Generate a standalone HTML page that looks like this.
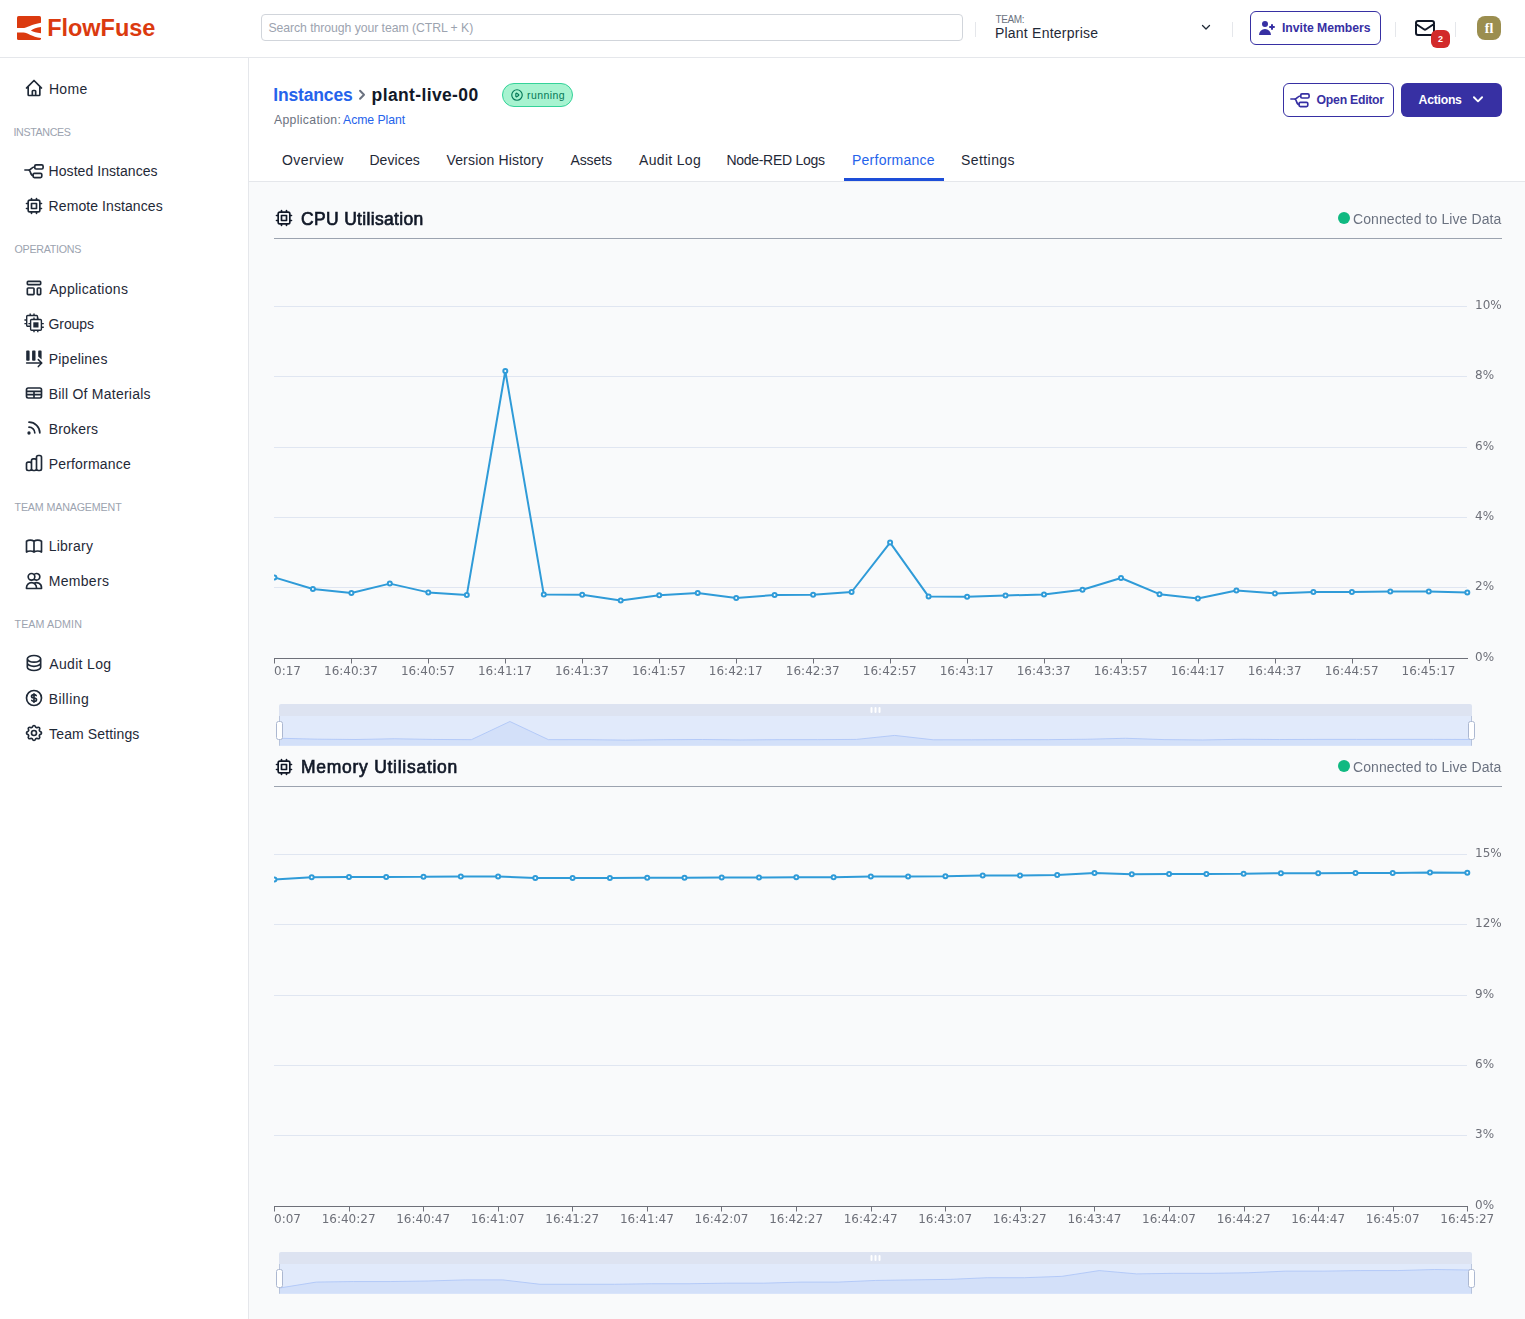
<!DOCTYPE html><html lang="en"><head><meta charset="utf-8"><title>FlowFuse - plant-live-00 - Performance</title><style>
*{box-sizing:border-box}
html,body{margin:0;padding:0}
body{width:1525px;height:1319px;overflow:hidden;position:relative;background:#f9fafb;font-family:"Liberation Sans",sans-serif}
.a{position:absolute;display:block}
.t{position:absolute;white-space:pre;line-height:20px;height:20px}
.sep{position:absolute;top:22px;width:1px;height:15px;background:#e5e7eb}
</style></head><body>
<header>
<div class="a" style="left:0;top:0;width:1525px;height:58px;background:#fff;border-bottom:1px solid #e5e7eb"></div>
<svg class="a" style="left:17px;top:16px" width="24" height="24" viewBox="0 0 24 24"><rect width="24" height="24" rx="1.6" fill="#db3a0f"/><path d="M0 12.1H5.5C10 12.1 14.5 8.3 24 6.8V11.1C19.5 11.6 16.5 13 13.9 14.5C16.5 15.9 19.5 16.9 24 17.2V21.95C14.5 21.2 11 16.6 6.5 16.6H0z" fill="#fff"/></svg>
<div class="a" style="left:261px;top:14px;width:702px;height:27px;border:1px solid #d1d5db;border-radius:4px;background:#fff"></div>
<div class="sep" style="left:975px"></div>
<div class="sep" style="left:1232px"></div>
<div class="sep" style="left:1395px"></div>
<div class="sep" style="left:1455px"></div>
<svg class="a" style="left:1200.2px;top:20.7px" width="12" height="12" viewBox="0 0 24 24" fill="none" stroke="#1f2937" stroke-width="2.6" stroke-linecap="round" stroke-linejoin="round"><path d="M19 9l-7 7-7-7"/></svg>
<div class="a" style="left:1250px;top:11px;width:131px;height:34px;border:1px solid #3730a3;border-radius:6px;background:#fff"></div>
<svg class="a" style="left:1257px;top:17.5px" width="20" height="20" viewBox="0 0 20 20" fill="#3730a3"><path d="M8 9a3 3 0 100-6 3 3 0 000 6zM8 11a6 6 0 016 6H2a6 6 0 016-6zM16 7a1 1 0 10-2 0v1h-1a1 1 0 100 2h1v1a1 1 0 102 0v-1h1a1 1 0 100-2h-1V7z"/></svg>
<svg class="a" style="left:1413px;top:16px" width="24" height="24" viewBox="0 0 24 24" fill="none" stroke="#111827" stroke-width="2" stroke-linecap="round" stroke-linejoin="round"><path d="M3 8l7.89 5.26a2 2 0 002.22 0L21 8M5 19h14a2 2 0 002-2V7a2 2 0 00-2-2H5a2 2 0 00-2 2v10a2 2 0 002 2z"/></svg>
<div class="a" style="left:1431px;top:30px;width:19px;height:18px;border-radius:6px;background:#d22a2b;color:#fff;font-size:9px;font-weight:700;text-align:center;line-height:18px">2</div>
<div class="a" style="left:1477px;top:16px;width:24px;height:24px;border-radius:8px;background:#9b8e4f;color:#fff;font-family:'Liberation Serif',serif;font-size:14px;font-weight:700;text-align:center;line-height:25px">fl</div>
<div class="t" style="left:268.40px;top:17.50px;font-size:12.25px;color:#9ca3af;letter-spacing:-0.059px;">Search through your team (CTRL + K)</div>
<div class="t" style="left:995.60px;top:9.50px;font-size:10px;color:#6b7280;letter-spacing:-0.400px;">TEAM:</div>
<div class="t" style="left:994.90px;top:23.00px;font-size:14px;color:#1f2937;letter-spacing:0.233px;">Plant Enterprise</div>
<div class="t" style="left:1282.00px;top:17.50px;font-size:12.25px;color:#3730a3;letter-spacing:-0.046px;font-weight:700;">Invite Members</div>
<div class="t" style="left:47.20px;top:17.90px;font-size:23.5px;color:#db3a0f;letter-spacing:-0.029px;font-weight:700;">FlowFuse</div>
</header>
<nav>
<div class="a" style="left:0;top:58px;width:249px;height:1261px;background:#fff;border-right:1px solid #e5e7eb"></div>
<svg class="a" style="left:24px;top:78px" width="20" height="20" viewBox="0 0 24 24" fill="none" stroke="#1f2937" stroke-width="2" stroke-linecap="round" stroke-linejoin="round"><path d="M3 12l2-2m0 0l7-7 7 7M5 10v10a1 1 0 001 1h3m10-11l2 2m-2-2v10a1 1 0 01-1 1h-3m-6 0a1 1 0 001-1v-4a1 1 0 011-1h2a1 1 0 011 1v4a1 1 0 001 1m-6 0h6"/></svg>
<svg class="a" style="left:24px;top:161px" width="20" height="20" viewBox="0 0 20 20" fill="none" stroke="#1f2937" stroke-width="1.67" stroke-linecap="round" stroke-linejoin="round"><rect x="10.7" y="3.9" width="8.4" height="4.1" rx="1.3"/><rect x="9.1" y="12.3" width="8.7" height="4.3" rx="1.3"/><path d="M0.9 9H4.2C7.6 9 7 6 10.7 6M4.2 9C7.6 9 5.6 14.5 9.1 14.5"/></svg>
<svg class="a" style="left:24px;top:196px" width="20" height="20" viewBox="0 0 24 24" fill="none" stroke="#1f2937" stroke-width="2" stroke-linecap="round" stroke-linejoin="round"><path d="M9 3v2m6-2v2M9 19v2m6-2v2M5 9H3m2 6H3m18-6h-2m2 6h-2M7 19h10a2 2 0 002-2V7a2 2 0 00-2-2H7a2 2 0 00-2 2v10a2 2 0 002 2zM9 9h6v6H9V9z"/></svg>
<svg class="a" style="left:24px;top:277.5px" width="20" height="20" viewBox="0 0 24 24" fill="none" stroke="#1f2937" stroke-width="2" stroke-linecap="round" stroke-linejoin="round"><path d="M4 5a1 1 0 011-1h14a1 1 0 011 1v2a1 1 0 01-1 1H5a1 1 0 01-1-1V5zM4 13a1 1 0 011-1h6a1 1 0 011 1v6a1 1 0 01-1 1H5a1 1 0 01-1-1v-6zM16 13a1 1 0 011-1h2a1 1 0 011 1v6a1 1 0 01-1 1h-2a1 1 0 01-1-1v-6z"/></svg>
<svg class="a" style="left:23.6px;top:313.2px" width="22" height="22" viewBox="0 0 22 22" fill="none" stroke="#1f2937" stroke-width="1.4" stroke-linecap="butt" stroke-linejoin="round"><rect x="2.7" y="2.5" width="10.8" height="10.8" rx="1"/><path d="M6.2 2.5V0.6M10 2.5V0.6M2.7 7H0.4M2.7 10.6H0.4"/><rect x="6.6" y="6.5" width="10.8" height="10.8" rx="1" fill="#fff"/><rect x="9.3" y="9.3" width="5.2" height="5.2" fill="#1f2937" stroke="none"/><path d="M10 6.5V4.6M13.8 6.5V4.6M10 17.3V19.3M13.8 17.3V19.3M6.6 10.6H4.4M17.4 10.6H19.8M17.4 14.2H19.8"/></svg>
<svg class="a" style="left:24px;top:347.8px" width="20" height="20" viewBox="0 0 20 20" fill="none" stroke="#1f2937" stroke-width="1.5" stroke-linecap="round" stroke-linejoin="round"><rect x="2.2" y="2.6" width="3.4" height="10.2" rx="0.8" fill="#1f2937" stroke="none"/><rect x="8.1" y="2.6" width="3.4" height="10.2" rx="0.8" fill="#1f2937" stroke="none"/><path d="M14.2 3.4a0.8 0.8 0 01.8-.8h1.8a0.8 0.8 0 01.8.8V11.6L14.2 8.6z" fill="#1f2937" stroke="none"/><path d="M2.6 15H17.6M14.3 11.6L17.8 15L14.3 18.6"/></svg>
<svg class="a" style="left:24px;top:382.5px" width="20" height="20" viewBox="0 0 24 24" fill="none" stroke="#1f2937" stroke-width="2" stroke-linecap="round" stroke-linejoin="round"><path d="M3 10h18M3 14h18m-9-4v8m-7 0h14a2 2 0 002-2V8a2 2 0 00-2-2H5a2 2 0 00-2 2v8a2 2 0 002 2z"/></svg>
<svg class="a" style="left:24px;top:417.5px" width="20" height="20" viewBox="0 0 24 24" fill="none" stroke="#1f2937" stroke-width="2" stroke-linecap="round" stroke-linejoin="round"><path d="M6 5c7.18 0 13 5.82 13 13M6 11a7 7 0 017 7m-6 0a1 1 0 11-2 0 1 1 0 012 0z"/></svg>
<svg class="a" style="left:24px;top:452.5px" width="20" height="20" viewBox="0 0 24 24" fill="none" stroke="#1f2937" stroke-width="2" stroke-linecap="round" stroke-linejoin="round"><path d="M9 19v-6a2 2 0 00-2-2H5a2 2 0 00-2 2v6a2 2 0 002 2h2a2 2 0 002-2zm0 0V9a2 2 0 012-2h2a2 2 0 012 2v10m-6 0a2 2 0 002 2h2a2 2 0 002-2m0 0V5a2 2 0 012-2h2a2 2 0 012 2v14a2 2 0 01-2 2h-2a2 2 0 01-2-2z"/></svg>
<svg class="a" style="left:24px;top:535.8px" width="20" height="20" viewBox="0 0 24 24" fill="none" stroke="#1f2937" stroke-width="2" stroke-linecap="round" stroke-linejoin="round"><path d="M12 6.253v13m0-13C10.832 5.477 9.246 5 7.5 5S4.168 5.477 3 6.253v13C4.168 18.477 5.754 18 7.5 18s3.332.477 4.5 1.253m0-13C13.168 5.477 14.754 5 16.5 5c1.747 0 3.332.477 4.5 1.253v13C19.832 18.477 18.247 18 16.5 18c-1.746 0-3.332.477-4.5 1.253"/></svg>
<svg class="a" style="left:24px;top:570.8px" width="20" height="20" viewBox="0 0 24 24" fill="none" stroke="#1f2937" stroke-width="2" stroke-linecap="round" stroke-linejoin="round"><path d="M12 4.354a4 4 0 110 5.292M15 21H3v-1a6 6 0 0112 0v1zm0 0h6v-1a6 6 0 00-9-5.197M13 7a4 4 0 11-8 0 4 4 0 018 0z"/></svg>
<svg class="a" style="left:24px;top:652.5px" width="20" height="20" viewBox="0 0 24 24" fill="none" stroke="#1f2937" stroke-width="2" stroke-linecap="round" stroke-linejoin="round"><path d="M4 7v10c0 2.21 3.582 4 8 4s8-1.79 8-4V7M4 7c0 2.21 3.582 4 8 4s8-1.79 8-4M4 7c0-2.21 3.582-4 8-4s8 1.79 8 4m0 5c0 2.21-3.582 4-8 4s-8-1.79-8-4"/></svg>
<svg class="a" style="left:24px;top:687.5px" width="20" height="20" viewBox="0 0 24 24" fill="none" stroke="#1f2937" stroke-width="2" stroke-linecap="round" stroke-linejoin="round"><path d="M12 8c-1.657 0-3 .895-3 2s1.343 2 3 2 3 .895 3 2-1.343 2-3 2m0-8c1.11 0 2.08.402 2.599 1M12 8V7m0 1v8m0 0v1m0-1c-1.11 0-2.08-.402-2.599-1M21 12a9 9 0 11-18 0 9 9 0 0118 0z"/></svg>
<svg class="a" style="left:24px;top:722.5px" width="20" height="20" viewBox="0 0 24 24" fill="none" stroke="#1f2937" stroke-width="2" stroke-linecap="round" stroke-linejoin="round"><path d="M10.325 4.317c.426-1.756 2.924-1.756 3.35 0a1.724 1.724 0 002.573 1.066c1.543-.94 3.31.826 2.37 2.37a1.724 1.724 0 001.065 2.572c1.756.426 1.756 2.924 0 3.35a1.724 1.724 0 00-1.066 2.573c.94 1.543-.826 3.31-2.37 2.37a1.724 1.724 0 00-2.572 1.065c-.426 1.756-2.924 1.756-3.35 0a1.724 1.724 0 00-2.573-1.066c-1.543.94-3.31-.826-2.37-2.37a1.724 1.724 0 00-1.065-2.572c-1.756-.426-1.756-2.924 0-3.35a1.724 1.724 0 001.066-2.573c-.94-1.543.826-3.31 2.37-2.37.996.608 2.296.07 2.572-1.065zM15 12a3 3 0 11-6 0 3 3 0 016 0z"/></svg>
<div class="t" style="left:48.90px;top:79.00px;font-size:14px;color:#1f2937;letter-spacing:0.367px;">Home</div>
<div class="t" style="left:48.60px;top:161.00px;font-size:14px;color:#1f2937;letter-spacing:0.053px;">Hosted Instances</div>
<div class="t" style="left:48.60px;top:196.00px;font-size:14px;color:#1f2937;letter-spacing:0.080px;">Remote Instances</div>
<div class="t" style="left:49.20px;top:278.50px;font-size:14px;color:#1f2937;letter-spacing:0.291px;">Applications</div>
<div class="t" style="left:48.60px;top:313.50px;font-size:14px;color:#1f2937;letter-spacing:-0.120px;">Groups</div>
<div class="t" style="left:48.70px;top:348.50px;font-size:14px;color:#1f2937;letter-spacing:0.237px;">Pipelines</div>
<div class="t" style="left:48.70px;top:383.50px;font-size:14px;color:#1f2937;letter-spacing:0.244px;">Bill Of Materials</div>
<div class="t" style="left:48.70px;top:418.50px;font-size:14px;color:#1f2937;letter-spacing:0.183px;">Brokers</div>
<div class="t" style="left:48.70px;top:453.50px;font-size:14px;color:#1f2937;letter-spacing:0.190px;">Performance</div>
<div class="t" style="left:48.70px;top:536.00px;font-size:14px;color:#1f2937;letter-spacing:0.250px;">Library</div>
<div class="t" style="left:48.70px;top:571.00px;font-size:14px;color:#1f2937;letter-spacing:0.317px;">Members</div>
<div class="t" style="left:49.20px;top:653.50px;font-size:14px;color:#1f2937;letter-spacing:0.350px;">Audit Log</div>
<div class="t" style="left:48.70px;top:688.50px;font-size:14px;color:#1f2937;letter-spacing:0.450px;">Billing</div>
<div class="t" style="left:49.10px;top:723.50px;font-size:14px;color:#1f2937;letter-spacing:0.125px;">Team Settings</div>
<div class="t" style="left:13.50px;top:122.00px;font-size:10.7px;color:#9ca3af;letter-spacing:-0.375px;">INSTANCES</div>
<div class="t" style="left:14.50px;top:239.00px;font-size:10.7px;color:#9ca3af;letter-spacing:-0.278px;">OPERATIONS</div>
<div class="t" style="left:14.50px;top:497.00px;font-size:10.7px;color:#9ca3af;letter-spacing:-0.150px;">TEAM MANAGEMENT</div>
<div class="t" style="left:14.50px;top:614.00px;font-size:10.7px;color:#9ca3af;letter-spacing:0.100px;">TEAM ADMIN</div>
</nav>
<main>
<div class="a" style="left:249px;top:58px;width:1276px;height:124px;background:#fff;border-bottom:1px solid #e5e7eb"></div>
<svg class="a" style="left:355.1px;top:88.15px" width="13.5" height="13.5" viewBox="0 0 24 24" fill="none" stroke="#6b7280" stroke-width="3.6" stroke-linecap="round" stroke-linejoin="round"><path d="M9 5l7 7-7 7"/></svg>
<div class="a" style="left:502px;top:83px;width:71px;height:24px;border:1px solid #34d399;border-radius:12px;background:#a7f3d0"></div>
<svg class="a" style="left:509.8px;top:88.1px" width="14" height="14" viewBox="0 0 24 24" fill="none" stroke="#047857" stroke-width="2" stroke-linecap="round" stroke-linejoin="round"><path d="M14.752 11.168l-3.197-2.132A1 1 0 0010 9.87v4.263a1 1 0 001.555.832l3.197-2.132a1 1 0 000-1.664zM21 12a9 9 0 11-18 0 9 9 0 0118 0z"/></svg>
<div class="a" style="left:844px;top:178px;width:100px;height:3px;background:#1d4ed8"></div>
<div class="a" style="left:1283px;top:83px;width:111px;height:34px;border:1px solid #3730a3;border-radius:6px;background:#fff"></div>
<svg class="a" style="left:1290px;top:90px" width="20" height="20" viewBox="0 0 20 20" fill="none" stroke="#3730a3" stroke-width="1.67" stroke-linecap="round" stroke-linejoin="round"><rect x="10.7" y="3.9" width="8.4" height="4.1" rx="1.3"/><rect x="9.1" y="12.3" width="8.7" height="4.3" rx="1.3"/><path d="M0.9 9H4.2C7.6 9 7 6 10.7 6M4.2 9C7.6 9 5.6 14.5 9.1 14.5"/></svg>
<div class="a" style="left:1401px;top:83px;width:101px;height:34px;border-radius:6px;background:#3730a3"></div>
<svg class="a" style="left:1471px;top:92.2px" width="14" height="14" viewBox="0 0 24 24" fill="none" stroke="#fff" stroke-width="3.2" stroke-linecap="round" stroke-linejoin="round"><path d="M19 9l-7 7-7-7"/></svg>
<svg class="a" style="left:274px;top:208px" width="20" height="20" viewBox="0 0 24 24" fill="none" stroke="#111827" stroke-width="2" stroke-linecap="round" stroke-linejoin="round"><path d="M9 3v2m6-2v2M9 19v2m6-2v2M5 9H3m2 6H3m18-6h-2m2 6h-2M7 19h10a2 2 0 002-2V7a2 2 0 00-2-2H7a2 2 0 00-2 2v10a2 2 0 002 2zM9 9h6v6H9V9z"/></svg>
<div class="a" style="left:1338px;top:212px;width:12px;height:12px;border-radius:6px;background:#10b981"></div>
<div class="a" style="left:274px;top:238px;width:1228px;height:1px;background:#9ca3af"></div>
<svg class="a" style="left:274px;top:757px" width="20" height="20" viewBox="0 0 24 24" fill="none" stroke="#111827" stroke-width="2" stroke-linecap="round" stroke-linejoin="round"><path d="M9 3v2m6-2v2M9 19v2m6-2v2M5 9H3m2 6H3m18-6h-2m2 6h-2M7 19h10a2 2 0 002-2V7a2 2 0 00-2-2H7a2 2 0 00-2 2v10a2 2 0 002 2zM9 9h6v6H9V9z"/></svg>
<div class="a" style="left:1338px;top:760px;width:12px;height:12px;border-radius:6px;background:#10b981"></div>
<div class="a" style="left:274px;top:786px;width:1228px;height:1px;background:#9ca3af"></div>
<div class="t" style="left:273.20px;top:84.50px;font-size:17.5px;color:#2563eb;letter-spacing:-0.150px;font-weight:700;">Instances</div>
<div class="t" style="left:371.60px;top:84.50px;font-size:17.5px;color:#111827;letter-spacing:0.367px;font-weight:700;">plant-live-00</div>
<div class="t" style="left:274.00px;top:109.50px;font-size:12.25px;color:#6b7280;letter-spacing:0.318px;">Application:</div>
<div class="t" style="left:343.00px;top:109.50px;font-size:12.25px;color:#2563eb;letter-spacing:-0.044px;">Acme Plant</div>
<div class="t" style="left:527.00px;top:85.00px;font-size:10.5px;color:#047857;letter-spacing:0.433px;">running</div>
<div class="t" style="left:282.00px;top:150.00px;font-size:14px;color:#1f2937;letter-spacing:0.429px;">Overview</div>
<div class="t" style="left:369.40px;top:150.00px;font-size:14px;color:#1f2937;letter-spacing:0.100px;">Devices</div>
<div class="t" style="left:446.40px;top:150.00px;font-size:14px;color:#1f2937;letter-spacing:0.186px;">Version History</div>
<div class="t" style="left:570.40px;top:150.00px;font-size:14px;color:#1f2937;letter-spacing:-0.080px;">Assets</div>
<div class="t" style="left:639.00px;top:150.00px;font-size:14px;color:#1f2937;letter-spacing:0.325px;">Audit Log</div>
<div class="t" style="left:726.40px;top:150.00px;font-size:14px;color:#1f2937;letter-spacing:-0.283px;">Node-RED Logs</div>
<div class="t" style="left:852.00px;top:150.00px;font-size:14px;color:#2563eb;letter-spacing:0.240px;">Performance</div>
<div class="t" style="left:961.00px;top:150.00px;font-size:14px;color:#1f2937;letter-spacing:0.429px;">Settings</div>
<div class="t" style="left:1316.60px;top:90.00px;font-size:12.25px;color:#3730a3;letter-spacing:-0.260px;font-weight:700;">Open Editor</div>
<div class="t" style="left:1418.60px;top:90.00px;font-size:12.25px;color:#ffffff;letter-spacing:-0.267px;font-weight:700;">Actions</div>
<div class="t" style="left:301.40px;top:208.50px;font-size:17.5px;color:#111827;letter-spacing:0.329px;-webkit-text-stroke:0.65px #111827;will-change:transform;">CPU Utilisation</div>
<div class="t" style="left:300.60px;top:756.50px;font-size:17.5px;color:#111827;letter-spacing:0.729px;-webkit-text-stroke:0.65px #111827;will-change:transform;">Memory Utilisation</div>
<div class="t" style="left:1353.40px;top:209.00px;font-size:14px;color:#6b7280;letter-spacing:0.095px;will-change:transform;">Connected to Live Data</div>
<div class="t" style="left:1353.40px;top:757.00px;font-size:14px;color:#6b7280;letter-spacing:0.095px;will-change:transform;">Connected to Live Data</div>
<svg class="a" style="left:0;top:0;will-change:transform" width="1525" height="1319" viewBox="0 0 1525 1319">
<path d="M274.0 306.5H1467" stroke="#E0E6F1" stroke-width="1"/>
<path d="M274.0 376.5H1467" stroke="#E0E6F1" stroke-width="1"/>
<path d="M274.0 447.5H1467" stroke="#E0E6F1" stroke-width="1"/>
<path d="M274.0 517.5H1467" stroke="#E0E6F1" stroke-width="1"/>
<path d="M274.0 587.5H1467" stroke="#E0E6F1" stroke-width="1"/>
<text x="1475" y="308.9" fill="#6E7079" font-size="12" font-family="'DejaVu Sans', sans-serif">10%</text>
<text x="1475" y="378.9" fill="#6E7079" font-size="12" font-family="'DejaVu Sans', sans-serif">8%</text>
<text x="1475" y="449.9" fill="#6E7079" font-size="12" font-family="'DejaVu Sans', sans-serif">6%</text>
<text x="1475" y="519.9" fill="#6E7079" font-size="12" font-family="'DejaVu Sans', sans-serif">4%</text>
<text x="1475" y="589.9" fill="#6E7079" font-size="12" font-family="'DejaVu Sans', sans-serif">2%</text>
<text x="1475" y="660.9" fill="#6E7079" font-size="12" font-family="'DejaVu Sans', sans-serif">0%</text>
<path d="M274.0 658.5H1468" stroke="#6E7079" stroke-width="1"/>
<path d="M274.5 658.5v5M351.5 658.5v5M428.5 658.5v5M505.5 658.5v5M582.5 658.5v5M659.5 658.5v5M736.5 658.5v5M813.5 658.5v5M890.5 658.5v5M967.5 658.5v5M1044.5 658.5v5M1121.5 658.5v5M1198.5 658.5v5M1275.5 658.5v5M1352.5 658.5v5M1429.5 658.5v5" stroke="#6E7079" stroke-width="1"/>
<clipPath id="clip0"><rect x="274.0" y="230" width="1300" height="470"/></clipPath>
<g clip-path="url(#clip0)">
<text x="274.0" y="675.1" text-anchor="middle" fill="#6E7079" font-size="12" font-family="'DejaVu Sans', sans-serif">16:40:17</text>
<text x="351.0" y="675.1" text-anchor="middle" fill="#6E7079" font-size="12" font-family="'DejaVu Sans', sans-serif">16:40:37</text>
<text x="427.9" y="675.1" text-anchor="middle" fill="#6E7079" font-size="12" font-family="'DejaVu Sans', sans-serif">16:40:57</text>
<text x="504.9" y="675.1" text-anchor="middle" fill="#6E7079" font-size="12" font-family="'DejaVu Sans', sans-serif">16:41:17</text>
<text x="581.9" y="675.1" text-anchor="middle" fill="#6E7079" font-size="12" font-family="'DejaVu Sans', sans-serif">16:41:37</text>
<text x="658.9" y="675.1" text-anchor="middle" fill="#6E7079" font-size="12" font-family="'DejaVu Sans', sans-serif">16:41:57</text>
<text x="735.8" y="675.1" text-anchor="middle" fill="#6E7079" font-size="12" font-family="'DejaVu Sans', sans-serif">16:42:17</text>
<text x="812.8" y="675.1" text-anchor="middle" fill="#6E7079" font-size="12" font-family="'DejaVu Sans', sans-serif">16:42:37</text>
<text x="889.8" y="675.1" text-anchor="middle" fill="#6E7079" font-size="12" font-family="'DejaVu Sans', sans-serif">16:42:57</text>
<text x="966.7" y="675.1" text-anchor="middle" fill="#6E7079" font-size="12" font-family="'DejaVu Sans', sans-serif">16:43:17</text>
<text x="1043.7" y="675.1" text-anchor="middle" fill="#6E7079" font-size="12" font-family="'DejaVu Sans', sans-serif">16:43:37</text>
<text x="1120.7" y="675.1" text-anchor="middle" fill="#6E7079" font-size="12" font-family="'DejaVu Sans', sans-serif">16:43:57</text>
<text x="1197.6" y="675.1" text-anchor="middle" fill="#6E7079" font-size="12" font-family="'DejaVu Sans', sans-serif">16:44:17</text>
<text x="1274.6" y="675.1" text-anchor="middle" fill="#6E7079" font-size="12" font-family="'DejaVu Sans', sans-serif">16:44:37</text>
<text x="1351.6" y="675.1" text-anchor="middle" fill="#6E7079" font-size="12" font-family="'DejaVu Sans', sans-serif">16:44:57</text>
<text x="1428.5" y="675.1" text-anchor="middle" fill="#6E7079" font-size="12" font-family="'DejaVu Sans', sans-serif">16:45:17</text>
<polyline points="274.4,577.4 312.9,589.0 351.4,593.0 389.8,583.6 428.3,592.4 466.8,595.1 505.3,371.0 543.8,594.6 582.2,594.8 620.7,600.4 659.2,595.2 697.7,593.0 736.2,598.0 774.6,595.0 813.1,594.8 851.6,592.0 890.1,542.6 928.6,596.6 967.1,596.8 1005.5,595.4 1044.0,594.6 1082.5,589.8 1121.0,578.0 1159.5,594.2 1197.9,598.6 1236.4,590.4 1274.9,593.4 1313.4,592.0 1351.9,592.0 1390.3,591.6 1428.8,591.6 1467.3,592.6" fill="none" stroke="#2f9bd8" stroke-width="2" stroke-linejoin="bevel"/>
<circle cx="274.4" cy="577.4" r="2" fill="#fff" stroke="#2f9bd8" stroke-width="2"/>
<circle cx="312.9" cy="589.0" r="2" fill="#fff" stroke="#2f9bd8" stroke-width="2"/>
<circle cx="351.4" cy="593.0" r="2" fill="#fff" stroke="#2f9bd8" stroke-width="2"/>
<circle cx="389.8" cy="583.6" r="2" fill="#fff" stroke="#2f9bd8" stroke-width="2"/>
<circle cx="428.3" cy="592.4" r="2" fill="#fff" stroke="#2f9bd8" stroke-width="2"/>
<circle cx="466.8" cy="595.1" r="2" fill="#fff" stroke="#2f9bd8" stroke-width="2"/>
<circle cx="505.3" cy="371.0" r="2" fill="#fff" stroke="#2f9bd8" stroke-width="2"/>
<circle cx="543.8" cy="594.6" r="2" fill="#fff" stroke="#2f9bd8" stroke-width="2"/>
<circle cx="582.2" cy="594.8" r="2" fill="#fff" stroke="#2f9bd8" stroke-width="2"/>
<circle cx="620.7" cy="600.4" r="2" fill="#fff" stroke="#2f9bd8" stroke-width="2"/>
<circle cx="659.2" cy="595.2" r="2" fill="#fff" stroke="#2f9bd8" stroke-width="2"/>
<circle cx="697.7" cy="593.0" r="2" fill="#fff" stroke="#2f9bd8" stroke-width="2"/>
<circle cx="736.2" cy="598.0" r="2" fill="#fff" stroke="#2f9bd8" stroke-width="2"/>
<circle cx="774.6" cy="595.0" r="2" fill="#fff" stroke="#2f9bd8" stroke-width="2"/>
<circle cx="813.1" cy="594.8" r="2" fill="#fff" stroke="#2f9bd8" stroke-width="2"/>
<circle cx="851.6" cy="592.0" r="2" fill="#fff" stroke="#2f9bd8" stroke-width="2"/>
<circle cx="890.1" cy="542.6" r="2" fill="#fff" stroke="#2f9bd8" stroke-width="2"/>
<circle cx="928.6" cy="596.6" r="2" fill="#fff" stroke="#2f9bd8" stroke-width="2"/>
<circle cx="967.1" cy="596.8" r="2" fill="#fff" stroke="#2f9bd8" stroke-width="2"/>
<circle cx="1005.5" cy="595.4" r="2" fill="#fff" stroke="#2f9bd8" stroke-width="2"/>
<circle cx="1044.0" cy="594.6" r="2" fill="#fff" stroke="#2f9bd8" stroke-width="2"/>
<circle cx="1082.5" cy="589.8" r="2" fill="#fff" stroke="#2f9bd8" stroke-width="2"/>
<circle cx="1121.0" cy="578.0" r="2" fill="#fff" stroke="#2f9bd8" stroke-width="2"/>
<circle cx="1159.5" cy="594.2" r="2" fill="#fff" stroke="#2f9bd8" stroke-width="2"/>
<circle cx="1197.9" cy="598.6" r="2" fill="#fff" stroke="#2f9bd8" stroke-width="2"/>
<circle cx="1236.4" cy="590.4" r="2" fill="#fff" stroke="#2f9bd8" stroke-width="2"/>
<circle cx="1274.9" cy="593.4" r="2" fill="#fff" stroke="#2f9bd8" stroke-width="2"/>
<circle cx="1313.4" cy="592.0" r="2" fill="#fff" stroke="#2f9bd8" stroke-width="2"/>
<circle cx="1351.9" cy="592.0" r="2" fill="#fff" stroke="#2f9bd8" stroke-width="2"/>
<circle cx="1390.3" cy="591.6" r="2" fill="#fff" stroke="#2f9bd8" stroke-width="2"/>
<circle cx="1428.8" cy="591.6" r="2" fill="#fff" stroke="#2f9bd8" stroke-width="2"/>
<circle cx="1467.3" cy="592.6" r="2" fill="#fff" stroke="#2f9bd8" stroke-width="2"/>
</g>
<path d="M279.0 716V706a2 2 0 012-2H1470.0a2 2 0 012 2V716z" fill="#dde3f1"/>
<rect x="279.0" y="716" width="1193.0" height="29.7" fill="#e1eafb"/>
<path d="M279.0 745.7L279.0 738.24L317.5 739.18L356.0 739.50L394.5 738.74L432.9 739.45L471.4 739.67L509.9 721.50L548.4 739.63L586.9 739.65L625.4 740.10L663.8 739.68L702.3 739.50L740.8 739.91L779.3 739.66L817.8 739.65L856.3 739.42L894.7 735.41L933.2 739.79L971.7 739.81L1010.2 739.69L1048.7 739.63L1087.2 739.24L1125.6 738.28L1164.1 739.60L1202.6 739.95L1241.1 739.29L1279.6 739.53L1318.1 739.42L1356.5 739.42L1395.0 739.39L1433.5 739.39L1472.0 739.47L1472.0 745.7z" fill="#d3e0f9"/>
<path d="M279.0 738.24L317.5 739.18L356.0 739.50L394.5 738.74L432.9 739.45L471.4 739.67L509.9 721.50L548.4 739.63L586.9 739.65L625.4 740.10L663.8 739.68L702.3 739.50L740.8 739.91L779.3 739.66L817.8 739.65L856.3 739.42L894.7 735.41L933.2 739.79L971.7 739.81L1010.2 739.69L1048.7 739.63L1087.2 739.24L1125.6 738.28L1164.1 739.60L1202.6 739.95L1241.1 739.29L1279.6 739.53L1318.1 739.42L1356.5 739.42L1395.0 739.39L1433.5 739.39L1472.0 739.47" fill="none" stroke="#a9c3f8" stroke-width="0.8"/>
<rect x="870.5" y="707" width="2" height="6" rx="1" fill="#fff"/>
<rect x="874.5" y="707" width="2" height="6" rx="1" fill="#fff"/>
<rect x="878.5" y="707" width="2" height="6" rx="1" fill="#fff"/>
<path d="M279.5 716V745.7" stroke="#ACB8D1" stroke-width="1" opacity="0.7"/>
<rect x="276.5" y="721.5" width="6" height="18" rx="2" fill="#fff" stroke="#ACB8D1" stroke-width="1"/>
<path d="M1471.5 716V745.7" stroke="#ACB8D1" stroke-width="1" opacity="0.7"/>
<rect x="1468.5" y="721.5" width="6" height="18" rx="2" fill="#fff" stroke="#ACB8D1" stroke-width="1"/>
<path d="M274.0 854.5H1467" stroke="#E0E6F1" stroke-width="1"/>
<path d="M274.0 924.5H1467" stroke="#E0E6F1" stroke-width="1"/>
<path d="M274.0 995.5H1467" stroke="#E0E6F1" stroke-width="1"/>
<path d="M274.0 1065.5H1467" stroke="#E0E6F1" stroke-width="1"/>
<path d="M274.0 1135.5H1467" stroke="#E0E6F1" stroke-width="1"/>
<text x="1475" y="856.9" fill="#6E7079" font-size="12" font-family="'DejaVu Sans', sans-serif">15%</text>
<text x="1475" y="926.9" fill="#6E7079" font-size="12" font-family="'DejaVu Sans', sans-serif">12%</text>
<text x="1475" y="997.9" fill="#6E7079" font-size="12" font-family="'DejaVu Sans', sans-serif">9%</text>
<text x="1475" y="1067.9" fill="#6E7079" font-size="12" font-family="'DejaVu Sans', sans-serif">6%</text>
<text x="1475" y="1137.9" fill="#6E7079" font-size="12" font-family="'DejaVu Sans', sans-serif">3%</text>
<text x="1475" y="1208.9" fill="#6E7079" font-size="12" font-family="'DejaVu Sans', sans-serif">0%</text>
<path d="M274.0 1206.5H1468" stroke="#6E7079" stroke-width="1"/>
<path d="M274.5 1206.5v5M349.5 1206.5v5M423.5 1206.5v5M498.5 1206.5v5M572.5 1206.5v5M647.5 1206.5v5M721.5 1206.5v5M796.5 1206.5v5M871.5 1206.5v5M945.5 1206.5v5M1020.5 1206.5v5M1094.5 1206.5v5M1169.5 1206.5v5M1244.5 1206.5v5M1318.5 1206.5v5M1393.5 1206.5v5M1467.5 1206.5v5" stroke="#6E7079" stroke-width="1"/>
<clipPath id="clip548"><rect x="274.0" y="778" width="1300" height="470"/></clipPath>
<g clip-path="url(#clip548)">
<text x="274.0" y="1223.1" text-anchor="middle" fill="#6E7079" font-size="12" font-family="'DejaVu Sans', sans-serif">16:40:07</text>
<text x="348.6" y="1223.1" text-anchor="middle" fill="#6E7079" font-size="12" font-family="'DejaVu Sans', sans-serif">16:40:27</text>
<text x="423.2" y="1223.1" text-anchor="middle" fill="#6E7079" font-size="12" font-family="'DejaVu Sans', sans-serif">16:40:47</text>
<text x="497.7" y="1223.1" text-anchor="middle" fill="#6E7079" font-size="12" font-family="'DejaVu Sans', sans-serif">16:41:07</text>
<text x="572.3" y="1223.1" text-anchor="middle" fill="#6E7079" font-size="12" font-family="'DejaVu Sans', sans-serif">16:41:27</text>
<text x="646.9" y="1223.1" text-anchor="middle" fill="#6E7079" font-size="12" font-family="'DejaVu Sans', sans-serif">16:41:47</text>
<text x="721.5" y="1223.1" text-anchor="middle" fill="#6E7079" font-size="12" font-family="'DejaVu Sans', sans-serif">16:42:07</text>
<text x="796.1" y="1223.1" text-anchor="middle" fill="#6E7079" font-size="12" font-family="'DejaVu Sans', sans-serif">16:42:27</text>
<text x="870.6" y="1223.1" text-anchor="middle" fill="#6E7079" font-size="12" font-family="'DejaVu Sans', sans-serif">16:42:47</text>
<text x="945.2" y="1223.1" text-anchor="middle" fill="#6E7079" font-size="12" font-family="'DejaVu Sans', sans-serif">16:43:07</text>
<text x="1019.8" y="1223.1" text-anchor="middle" fill="#6E7079" font-size="12" font-family="'DejaVu Sans', sans-serif">16:43:27</text>
<text x="1094.4" y="1223.1" text-anchor="middle" fill="#6E7079" font-size="12" font-family="'DejaVu Sans', sans-serif">16:43:47</text>
<text x="1169.0" y="1223.1" text-anchor="middle" fill="#6E7079" font-size="12" font-family="'DejaVu Sans', sans-serif">16:44:07</text>
<text x="1243.6" y="1223.1" text-anchor="middle" fill="#6E7079" font-size="12" font-family="'DejaVu Sans', sans-serif">16:44:27</text>
<text x="1318.1" y="1223.1" text-anchor="middle" fill="#6E7079" font-size="12" font-family="'DejaVu Sans', sans-serif">16:44:47</text>
<text x="1392.7" y="1223.1" text-anchor="middle" fill="#6E7079" font-size="12" font-family="'DejaVu Sans', sans-serif">16:45:07</text>
<text x="1467.3" y="1223.1" text-anchor="middle" fill="#6E7079" font-size="12" font-family="'DejaVu Sans', sans-serif">16:45:27</text>
<polyline points="274.4,879.4 311.7,877.2 349.0,877.0 386.2,877.0 423.5,876.8 460.8,876.4 498.1,876.4 535.3,878.0 572.6,878.0 609.9,878.0 647.2,877.8 684.5,877.8 721.7,877.6 759.0,877.6 796.3,877.2 833.6,877.2 870.8,876.6 908.1,876.4 945.4,876.2 982.7,875.6 1020.0,875.6 1057.2,875.1 1094.5,873.0 1131.8,874.2 1169.1,874.0 1206.4,874.0 1243.6,873.8 1280.9,873.2 1318.2,873.2 1355.5,873.0 1392.7,873.0 1430.0,872.6 1467.3,872.8" fill="none" stroke="#2f9bd8" stroke-width="2" stroke-linejoin="bevel"/>
<circle cx="274.4" cy="879.4" r="2" fill="#fff" stroke="#2f9bd8" stroke-width="2"/>
<circle cx="311.7" cy="877.2" r="2" fill="#fff" stroke="#2f9bd8" stroke-width="2"/>
<circle cx="349.0" cy="877.0" r="2" fill="#fff" stroke="#2f9bd8" stroke-width="2"/>
<circle cx="386.2" cy="877.0" r="2" fill="#fff" stroke="#2f9bd8" stroke-width="2"/>
<circle cx="423.5" cy="876.8" r="2" fill="#fff" stroke="#2f9bd8" stroke-width="2"/>
<circle cx="460.8" cy="876.4" r="2" fill="#fff" stroke="#2f9bd8" stroke-width="2"/>
<circle cx="498.1" cy="876.4" r="2" fill="#fff" stroke="#2f9bd8" stroke-width="2"/>
<circle cx="535.3" cy="878.0" r="2" fill="#fff" stroke="#2f9bd8" stroke-width="2"/>
<circle cx="572.6" cy="878.0" r="2" fill="#fff" stroke="#2f9bd8" stroke-width="2"/>
<circle cx="609.9" cy="878.0" r="2" fill="#fff" stroke="#2f9bd8" stroke-width="2"/>
<circle cx="647.2" cy="877.8" r="2" fill="#fff" stroke="#2f9bd8" stroke-width="2"/>
<circle cx="684.5" cy="877.8" r="2" fill="#fff" stroke="#2f9bd8" stroke-width="2"/>
<circle cx="721.7" cy="877.6" r="2" fill="#fff" stroke="#2f9bd8" stroke-width="2"/>
<circle cx="759.0" cy="877.6" r="2" fill="#fff" stroke="#2f9bd8" stroke-width="2"/>
<circle cx="796.3" cy="877.2" r="2" fill="#fff" stroke="#2f9bd8" stroke-width="2"/>
<circle cx="833.6" cy="877.2" r="2" fill="#fff" stroke="#2f9bd8" stroke-width="2"/>
<circle cx="870.8" cy="876.6" r="2" fill="#fff" stroke="#2f9bd8" stroke-width="2"/>
<circle cx="908.1" cy="876.4" r="2" fill="#fff" stroke="#2f9bd8" stroke-width="2"/>
<circle cx="945.4" cy="876.2" r="2" fill="#fff" stroke="#2f9bd8" stroke-width="2"/>
<circle cx="982.7" cy="875.6" r="2" fill="#fff" stroke="#2f9bd8" stroke-width="2"/>
<circle cx="1020.0" cy="875.6" r="2" fill="#fff" stroke="#2f9bd8" stroke-width="2"/>
<circle cx="1057.2" cy="875.1" r="2" fill="#fff" stroke="#2f9bd8" stroke-width="2"/>
<circle cx="1094.5" cy="873.0" r="2" fill="#fff" stroke="#2f9bd8" stroke-width="2"/>
<circle cx="1131.8" cy="874.2" r="2" fill="#fff" stroke="#2f9bd8" stroke-width="2"/>
<circle cx="1169.1" cy="874.0" r="2" fill="#fff" stroke="#2f9bd8" stroke-width="2"/>
<circle cx="1206.4" cy="874.0" r="2" fill="#fff" stroke="#2f9bd8" stroke-width="2"/>
<circle cx="1243.6" cy="873.8" r="2" fill="#fff" stroke="#2f9bd8" stroke-width="2"/>
<circle cx="1280.9" cy="873.2" r="2" fill="#fff" stroke="#2f9bd8" stroke-width="2"/>
<circle cx="1318.2" cy="873.2" r="2" fill="#fff" stroke="#2f9bd8" stroke-width="2"/>
<circle cx="1355.5" cy="873.0" r="2" fill="#fff" stroke="#2f9bd8" stroke-width="2"/>
<circle cx="1392.7" cy="873.0" r="2" fill="#fff" stroke="#2f9bd8" stroke-width="2"/>
<circle cx="1430.0" cy="872.6" r="2" fill="#fff" stroke="#2f9bd8" stroke-width="2"/>
<circle cx="1467.3" cy="872.8" r="2" fill="#fff" stroke="#2f9bd8" stroke-width="2"/>
</g>
<path d="M279.0 1264V1254a2 2 0 012-2H1470.0a2 2 0 012 2V1264z" fill="#dde3f1"/>
<rect x="279.0" y="1264" width="1193.0" height="29.7" fill="#e1eafb"/>
<path d="M279.0 1293.7L279.0 1288.10L316.3 1282.08L353.6 1281.54L390.8 1281.54L428.1 1280.99L465.4 1279.89L502.7 1279.89L540.0 1284.27L577.2 1284.27L614.5 1284.27L651.8 1283.72L689.1 1283.72L726.4 1283.18L763.7 1283.18L800.9 1282.08L838.2 1282.08L875.5 1280.44L912.8 1279.89L950.1 1279.35L987.3 1277.71L1024.6 1277.71L1061.9 1276.34L1099.2 1270.59L1136.5 1273.88L1173.8 1273.33L1211.0 1273.33L1248.3 1272.78L1285.6 1271.14L1322.9 1271.14L1360.2 1270.59L1397.4 1270.59L1434.7 1269.50L1472.0 1270.05L1472.0 1293.7z" fill="#d3e0f9"/>
<path d="M279.0 1288.10L316.3 1282.08L353.6 1281.54L390.8 1281.54L428.1 1280.99L465.4 1279.89L502.7 1279.89L540.0 1284.27L577.2 1284.27L614.5 1284.27L651.8 1283.72L689.1 1283.72L726.4 1283.18L763.7 1283.18L800.9 1282.08L838.2 1282.08L875.5 1280.44L912.8 1279.89L950.1 1279.35L987.3 1277.71L1024.6 1277.71L1061.9 1276.34L1099.2 1270.59L1136.5 1273.88L1173.8 1273.33L1211.0 1273.33L1248.3 1272.78L1285.6 1271.14L1322.9 1271.14L1360.2 1270.59L1397.4 1270.59L1434.7 1269.50L1472.0 1270.05" fill="none" stroke="#a9c3f8" stroke-width="0.8"/>
<rect x="870.5" y="1255" width="2" height="6" rx="1" fill="#fff"/>
<rect x="874.5" y="1255" width="2" height="6" rx="1" fill="#fff"/>
<rect x="878.5" y="1255" width="2" height="6" rx="1" fill="#fff"/>
<path d="M279.5 1264V1293.7" stroke="#ACB8D1" stroke-width="1" opacity="0.7"/>
<rect x="276.5" y="1269.5" width="6" height="18" rx="2" fill="#fff" stroke="#ACB8D1" stroke-width="1"/>
<path d="M1471.5 1264V1293.7" stroke="#ACB8D1" stroke-width="1" opacity="0.7"/>
<rect x="1468.5" y="1269.5" width="6" height="18" rx="2" fill="#fff" stroke="#ACB8D1" stroke-width="1"/>
</svg>
</main>
</body></html>
